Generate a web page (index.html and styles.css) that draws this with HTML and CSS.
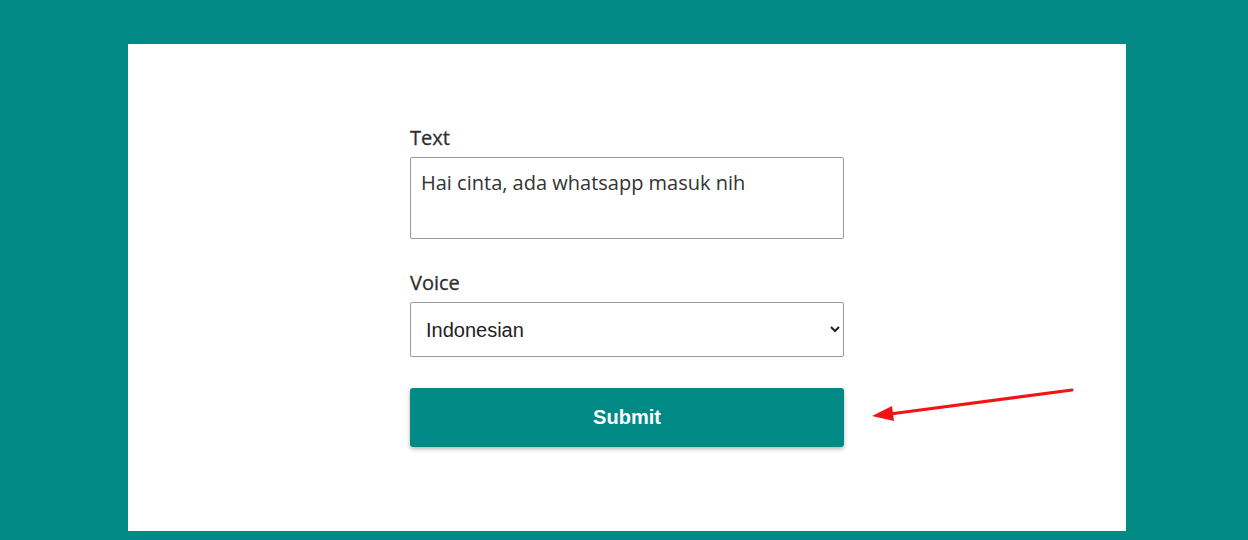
FILE: index.html
```html
<!DOCTYPE html>
<html lang="en">
<head>
  <meta charset="UTF-8" />
  <meta name="viewport" content="width=device-width, initial-scale=1.0" />
  <title>Text to Speech</title>
  <link rel="stylesheet" href="styles.css">
</head>
<body>
  <div class="container">
    <form class="tts-form" onsubmit="return false;">
      <label for="text">Text</label>
      <textarea id="text" rows="3">Hai cinta, ada whatsapp masuk nih</textarea>

      <label for="voice">Voice</label>
      <select id="voice">
        <option>Indonesian</option>
        <option>English</option>
        <option>Japanese</option>
      </select>

      <button type="submit">Submit</button>
    </form>

    <svg class="arrow" width="220" height="50" viewBox="0 0 220 50">
      <line x1="204" y1="4" x2="22" y2="28" stroke="#f01414" stroke-width="3" stroke-linecap="round" />
      <polygon points="4,30 24,20 26,35" fill="#f01414" />
    </svg>
  </div>
</body>
</html>
```

FILE: styles.css
```css
body {
  margin: 0;
  padding: 44px 122px 0 128px;
  background: #008985;
  font-family: "Open Sans", sans-serif;
}
.container {
  position: relative;
  background: #fff;
  height: 487px;
  padding-top: 81px;
  box-sizing: border-box;
}
.tts-form {
  width: 434px;
  margin: 0 auto;
}
label {
  display: block;
  font-size: 20px;
  font-weight: 500;
  color: #2e2e2e;
  line-height: 26px;
  margin-bottom: 6px;
  -webkit-text-stroke: 0.3px #2e2e2e;
}
textarea {
  display: block;
  width: 100%;
  height: 82px;
  box-sizing: border-box;
  padding: 11px 10px;
  border: 1px solid #9a9a9a;
  border-radius: 2px;
  font-family: "Open Sans", sans-serif;
  font-size: 20px;
  line-height: 28px;
  color: #333;
  resize: none;
  margin-bottom: 31px;
}
select {
  display: block;
  width: 100%;
  height: 55px;
  box-sizing: border-box;
  padding: 0 10px 0 11px;
  border: 1px solid #9a9a9a;
  border-radius: 2px;
  background: #fff;
  font-family: "Liberation Sans", Arial, sans-serif;
  font-size: 20px;
  color: #222;
  margin-bottom: 31px;
}
button {
  display: block;
  width: 100%;
  height: 59px;
  border: none;
  border-radius: 3px;
  background: #008985;
  color: #fff;
  font-family: "Liberation Sans", Arial, sans-serif;
  font-size: 20px;
  font-weight: bold;
  box-shadow: 0 2px 4px rgba(0,0,0,0.3);
  cursor: pointer;
}
.arrow {
  position: absolute;
  left: 740px;
  top: 342px;
}
```
